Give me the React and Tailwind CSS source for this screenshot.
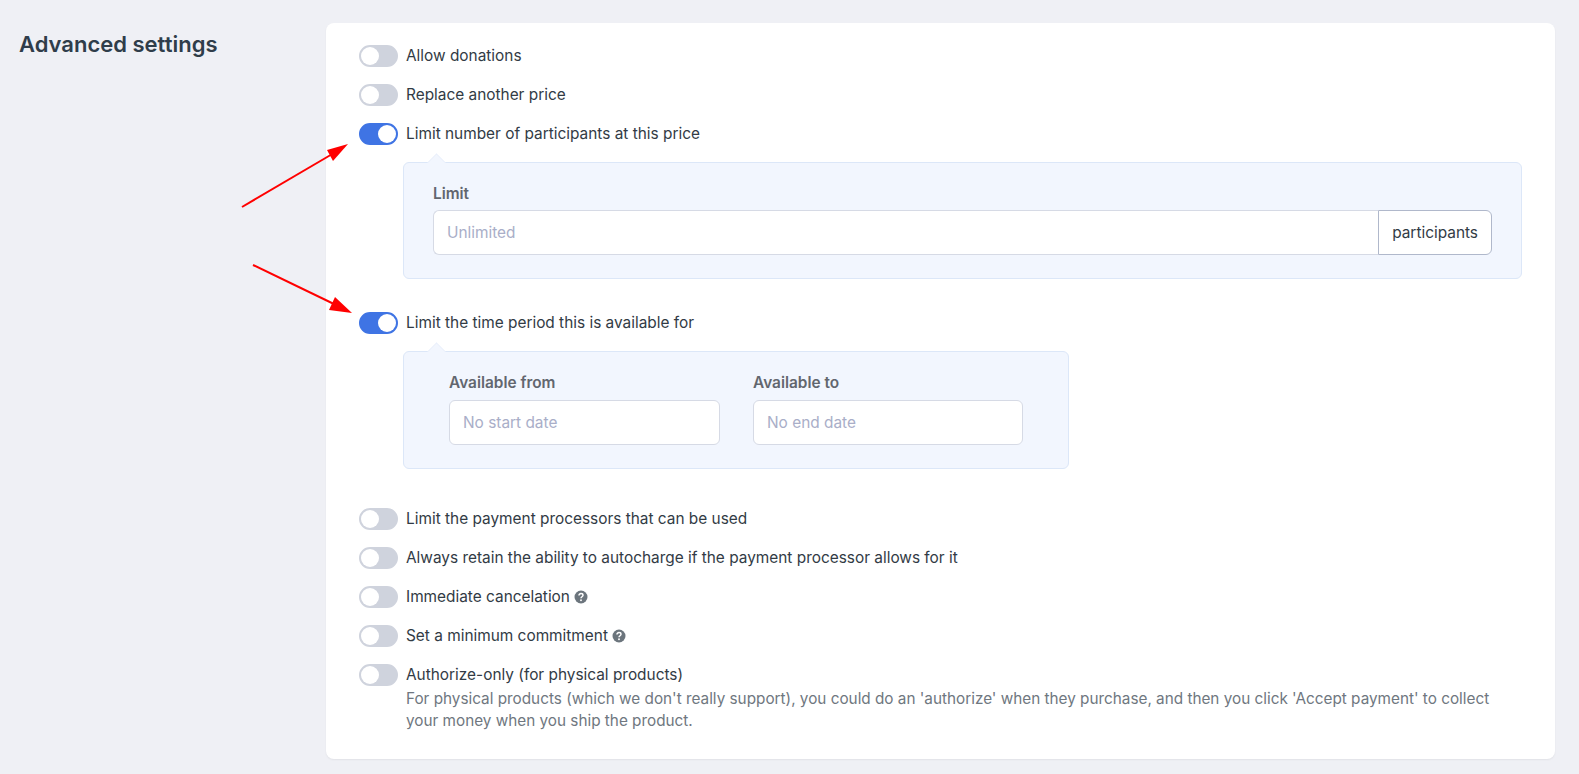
const font = { fontFamily: "Inter, 'Liberation Sans', sans-serif" };

function Toggle({ on }) {
  return (
    <span className={`flex w-[39px] h-[22px] shrink-0 rounded-full border-2 items-center ${on ? "bg-[#3f74e4] border-[#3f74e4] justify-end" : "bg-[#cfd3dd] border-[#cfd3dd] justify-start"}`}>
      <span className="w-[18px] h-[18px] rounded-full bg-white" />
    </span>
  );
}

function Help() {
  return (
    <svg width="14" height="14" viewBox="0 0 14 14" className="ml-1 shrink-0 mt-[1px]">
      <circle cx="7" cy="7" r="6.5" fill="#6c757d" />
      <path d="M5 5.4c0-1.1.9-1.8 2-1.8s2 .7 2 1.7c0 1.5-2 1.4-2 2.9" fill="none" stroke="#fff" strokeWidth="1.5" />
      <circle cx="7" cy="10.2" r="0.95" fill="#fff" />
    </svg>
  );
}

function Row({ on, label, help, children }) {
  return (
    <div className="flex gap-2 mb-[17px]">
      <Toggle on={on} />
      <div className="min-w-0">
        <div className="flex items-center h-[21px] text-[15.4px] text-[#323b45]">
          {label}
          {help && <Help />}
        </div>
        {children}
      </div>
    </div>
  );
}

function Panel({ className, children }) {
  return (
    <div className={`relative bg-[#f2f6fe] border border-[#dce7f8] rounded-md ${className}`}>
      <span className="absolute -top-[9px] left-[24px] w-[17px] h-[17px] rotate-45 bg-[#f2f6fe] border-l border-t border-[#e8eef9] scale-75" />
      {children}
    </div>
  );
}

function Label({ children, className }) {
  return <div className={`text-[15.4px] font-semibold text-[#62666f] leading-[22px] ${className}`}>{children}</div>;
}

function Field({ placeholder, className }) {
  return (
    <div className={`flex items-center h-[45px] px-[13px] bg-white border border-[#d6dae5] text-[15.4px] text-[#a9aec8] ${className}`}>
      {placeholder}
    </div>
  );
}

export default function App() {
  return (
    <div style={font} className="relative min-h-[774px] bg-[#eff0f5] flex items-start pt-[23px] pl-[19px] pr-[24px] overflow-hidden">
      <h2 className="w-[307px] shrink-0 text-[22px] font-semibold text-[#2f3d4a] leading-[24px] pt-[9px]">Advanced settings</h2>
      <div className="flex-1 bg-white rounded-lg shadow-[0_1px_2px_rgba(0,0,0,0.06)] h-[736px] pt-[22px] pl-[33px] pr-[33px]">
        <Row label="Allow donations" />
        <Row label="Replace another price" />
        <Row on label="Limit number of participants at this price" />
        <div className="pl-[44px] mb-[33px]">
          <Panel className="h-[117px] pt-[20px] px-[29px]">
            <Label className="mb-[5px]">Limit</Label>
            <div className="flex">
              <Field placeholder="Unlimited" className="flex-1 rounded-l-md border-r-0" />
              <div className="flex items-center h-[45px] px-[13px] bg-white border border-[#b0b8cb] rounded-r-md text-[15.4px] text-[#323b45]">participants</div>
            </div>
          </Panel>
        </div>
        <Row on label="Limit the time period this is available for" />
        <div className="pl-[44px] mb-[39px]">
          <Panel className="w-[666px] h-[118px] pt-[20px] pl-[45px] flex gap-[33px]">
            <div className="w-[271px]">
              <Label className="mb-[6px]">Available from</Label>
              <Field placeholder="No start date" className="rounded-md" />
            </div>
            <div className="w-[270px]">
              <Label className="mb-[6px]">Available to</Label>
              <Field placeholder="No end date" className="rounded-md" />
            </div>
          </Panel>
        </div>
        <Row label="Limit the payment processors that can be used" />
        <Row label="Always retain the ability to autocharge if the payment processor allows for it" />
        <Row label="Immediate cancelation" help />
        <Row label="Set a minimum commitment" help />
        <Row label="Authorize-only (for physical products)">
          <p className="text-[15.3px] leading-[22px] text-[#6f7780] mt-[3px]">
            For physical products (which we don't really support), you could do an 'authorize' when they purchase, and then you click 'Accept payment' to collect your money when you ship the product.
          </p>
        </Row>
      </div>
      <svg className="absolute left-0 top-0 pointer-events-none" width="1579" height="774" viewBox="0 0 1579 774">
        <line x1="242" y1="207" x2="334" y2="153" stroke="#ff0000" strokeWidth="2" />
        <polygon points="348,144 327,150 333,161" fill="#ff0000" />
        <line x1="253" y1="265" x2="336" y2="305" stroke="#ff0000" strokeWidth="2" />
        <polygon points="352,313 335,297 329,310" fill="#ff0000" />
      </svg>
    </div>
  );
}
